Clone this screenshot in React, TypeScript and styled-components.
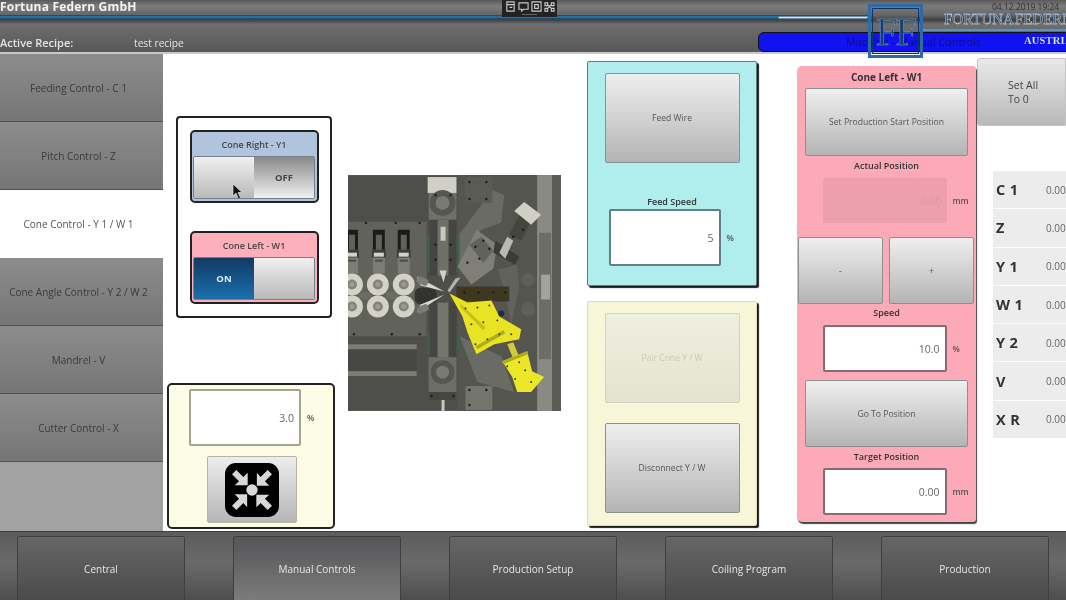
import React from "react";
import styled, { createGlobalStyle } from "styled-components";

const Global = createGlobalStyle`
  html, body { margin: 0; padding: 0; width: 1066px; height: 600px; overflow: hidden; background: #fff; }
  body { font-family: "Open Sans", "Noto Sans", sans-serif; color: #444; }
  * { box-sizing: border-box; }
`;

const Page = styled.div`
  width: 1066px; height: 600px; display: grid; grid-template-rows: 54px 477px 69px; position: relative; overflow: hidden;
  filter: blur(0.3px);
`;

const Header = styled.header`
  position: relative; background: linear-gradient(#5a5a5a 0, #7c7c7c 6px, #666 15px, #3f3f3f 20px, #6e6e6e 24px, #595959 50px);
  border-bottom: 2px solid #c9c9c9; color: #eee; overflow: hidden;
`;
const HeaderRows = styled.div`
  display: grid; grid-template-rows: 15px 5px 32px; height: 52px;
`;
const Company = styled.div`
  font-weight: 700; font-size: 12px; line-height: 14px; letter-spacing: 0.2px; color: #f2f2f2;
`;
const BlueLine = styled.div`
  height: 4px; width: 868px; background: linear-gradient(#123f60, #2f7fb3 50%, #123f60);
`;
const RecipeRow = styled.div`
  display: flex; align-items: flex-end; padding-bottom: 2px; font-size: 10.2px; color: #e4e4e4;
`;
const RecipeLabel = styled.span`
  width: 134px; font-weight: 600; font-size: 11px;
`;
const Widget = styled.div`
  position: absolute; left: 502px; top: 0; width: 55px; height: 17px; background: #232325;
  display: flex; gap: 2px; justify-content: center; padding-top: 1px;
`;
const WidgetHandle = styled.div`
  position: absolute; left: 20px; top: 14px; width: 15px; height: 1px; background: #666;
`;
const WhiteLine = styled.div`
  position: absolute; left: 778px; top: 16px; width: 90px; height: 3px; background: #d9e4ee; border-radius: 2px; border: 1px solid #6f8ca5;
`;
const StampDate = styled.div`
  position: absolute; left: 992px; top: 1px; font-size: 8.5px; line-height: 11px; color: #333;
`;
const BlueBar = styled.div`
  position: absolute; left: 758px; top: 32px; width: 320px; height: 20px; background: #1212f0;
  border: 1px solid #111; border-radius: 6px 0 0 6px; font-size: 10.8px; line-height: 18px; color: #0b0e8c; padding-left: 87px; white-space: nowrap;
`;
const Brand = styled.div`
  position: absolute; left: 944px; top: 10px; font-family: "Liberation Serif", serif; font-size: 15px; line-height: 19px; word-spacing: -2px;
  color: #1f4f86; -webkit-text-stroke: 0.35px #e6eef5; white-space: nowrap;
`;
const BrandSub = styled.div`
  position: absolute; left: 1024px; top: 35px; font-family: "Liberation Serif", serif; font-size: 10.5px; line-height: 12px; font-weight: 700;
  color: #e9eef8; letter-spacing: 0.2px; -webkit-text-stroke: 0.2px #123a8c;
`;
const BrandLine = styled.div`
  position: absolute; left: 922px; top: 29px; width: 144px; height: 2px; background: #5f93bd;
`;
const LogoBox = styled.div`
  position: absolute; left: 868px; top: 4px; width: 55px; height: 54px; z-index: 3;
  border: 3px solid #2c6ba5; outline: 1px solid #0f3561; outline-offset: -5px;
  display: flex; align-items: center; justify-content: center;
  font-family: "Liberation Serif", serif; font-size: 39px; line-height: 1; color: #0f3f78; -webkit-text-stroke: 0.45px #8fb0cc; letter-spacing: -2px;
`;

const Body = styled.main`
  display: grid; grid-template-columns: 163px 1fr; background: #fff; min-height: 0;
`;
const Sidebar = styled.nav`
  display: flex; flex-direction: column; background: #a2a2a2;
`;
const NavItem = styled.div<{ $active?: boolean }>`
  height: 68px; display: flex; align-items: center; justify-content: center; font-size: 10px; padding-right: 6px;
  color: ${(p) => (p.$active ? "#555" : "#3a3a3a")};
  background: ${(p) => (p.$active ? "#fff" : "linear-gradient(#8c8c8c, #767676)")};
  border-bottom: 1px solid ${(p) => (p.$active ? "#fff" : "#505050")};
`;
const Content = styled.div`
  display: flex; position: relative; align-items: flex-start; min-width: 0;
`;
const ColA = styled.div`
  width: 173px; margin-left: 4px; display: flex; flex-direction: column; align-items: flex-start; flex: none;
`;
const TogglePanel = styled.div`
  margin: 62px 0 0 9px; width: 156px; height: 202px; border: 2px solid #222; border-radius: 4px; background: #fff;
  display: flex; flex-direction: column; align-items: center; padding: 12px 0 0; gap: 28px;
`;
const ToggleCard = styled.div<{ $bg: string }>`
  width: 129px; height: 73px; border: 2px solid #222; border-radius: 5px; background: ${(p) => p.$bg};
  display: flex; flex-direction: column; align-items: center;
`;
const ToggleTitle = styled.div`
  height: 24px; line-height: 25px; font-size: 9px; font-weight: 600; color: #444;
`;
const Switch = styled.div`
  width: 122px; height: 43px; display: flex; border: 1px solid #76808c; border-radius: 2px; overflow: hidden; flex: none;
`;
const Half = styled.div<{ $kind: "light" | "dark" | "on" }>`
  flex: 1; display: flex; align-items: center; justify-content: center; font-size: 9.5px; font-weight: 700; position: relative;
  color: ${(p) => (p.$kind === "on" ? "#dce8f2" : "#444")};
  background: ${(p) =>
    p.$kind === "on" ? "linear-gradient(#123a63, #1a6fae)" : p.$kind === "dark" ? "linear-gradient(#8a8a8a, #f0f0f0)" : "linear-gradient(#f0f0f0, #b9b9b9)"};
`;
const Cursor = styled.svg`
  position: absolute; left: 38px; top: 26px;
`;
const SpeedPanel = styled.div`
  margin-top: 65px; width: 168px; height: 146px; border: 2px solid #222; border-radius: 5px; background: #fdfde6;
  display: flex; flex-direction: column; align-items: center; padding-top: 4px; gap: 10px;
`;
const Row = styled.div<{ $ml?: number; $mt?: number }>`
  display: flex; align-items: center; gap: 6px; position: relative;
  margin-left: ${(p) => p.$ml ?? 0}px; margin-top: ${(p) => p.$mt ?? 0}px;
`;
const Input = styled.div<{ $w: number; $h: number; $bd?: string; $off?: boolean }>`
  width: ${(p) => p.$w}px; height: ${(p) => p.$h}px; background: ${(p) => (p.$off ? "#eda0ac" : "#fff")};
  border: ${(p) => (p.$off ? "0" : `2px solid ${p.$bd ?? "#a3a38f"}`)}; border-radius: 2px;
  display: flex; align-items: center; justify-content: flex-end; padding-right: 5px;
  font-size: 10.5px; color: ${(p) => (p.$off ? "#dc9aa4" : "#666")};
`;
const Unit = styled.span`
  font-size: 8.5px; color: #555; font-weight: 600; width: 18px;
`;
const IconButton = styled.div`
  width: 90px; height: 67px; margin-left: 2px; border: 1px solid #b4b4a6; border-radius: 2px; background: linear-gradient(#ededed, #b6b6b6);
  display: flex; align-items: center; justify-content: center;
`;
const Machine = styled.svg`
  display: block; margin: 121px 0 0 8px; width: 213px; height: 236px; flex: none; filter: blur(0.4px);
`;
const ColC = styled.div`
  width: 170px; margin-left: 26px; padding-top: 7px; display: flex; flex-direction: column; gap: 15px; flex: none;
`;
const Panel = styled.div<{ $bg: string; $bd?: string }>`
  height: 225px; background: ${(p) => p.$bg}; border-radius: 2px;
  border: 1px solid ${(p) => p.$bd ?? "#66797a"}; box-shadow: 2px 2px 1px #1c1c1c;
  display: flex; flex-direction: column; align-items: center;
`;
const Btn = styled.div<{ $w: number; $h: number; $dim?: boolean; $mt?: number }>`
  width: ${(p) => p.$w}px; height: ${(p) => p.$h}px; flex: none; border-radius: 2px; margin-top: ${(p) => p.$mt ?? 0}px;
  border: 1px solid ${(p) => (p.$dim ? "#d3d3bf" : "#8b9191")};
  background: ${(p) => (p.$dim ? "linear-gradient(#efefe0, #e2e3cf)" : "linear-gradient(#efefef, #b4b4b4)")};
  display: flex; align-items: center; justify-content: center; font-size: 8.6px;
  color: ${(p) => (p.$dim ? "#c9c9b6" : "#555")};
`;
const Label = styled.div<{ $m?: string }>`
  font-size: 9px; font-weight: 600; color: #333; line-height: 13px; margin: ${(p) => p.$m ?? "0"}; text-align: center;
`;
const PinkPanel = styled.div`
  width: 179px; height: 456px; margin: 12px 0 0 40px; flex: none; background: #fdaab8; border-radius: 5px 3px 3px 5px;
  box-shadow: 1px 2px 1px #444; display: flex; flex-direction: column; align-items: center; position: relative;
`;
const PinkTitle = styled.div`
  height: 22px; line-height: 22px; font-size: 10px; font-weight: 700; color: #333;
`;
const Pair = styled.div`
  display: flex; gap: 6px; margin: 14px 1px 0 0;
`;
const RightCol = styled.div`
  flex: 1; display: flex; flex-direction: column; padding-top: 4px; min-width: 0;
`;
const SetAll = styled.div`
  margin-left: 1px; height: 68px; border-radius: 3px 0 0 3px; border: 1px solid #c4c4c4; background: linear-gradient(#e9e9e9, #b8b8b8);
  font-size: 10.5px; line-height: 14px; color: #444; padding: 19px 0 0 30px;
`;
const Table = styled.div`
  margin: 45px 0 0 17px; display: flex; flex-direction: column;
`;
const TableRow = styled.div`
  height: 38.3px; display: flex; align-items: center; background: #ececec; border-bottom: 1px solid #fff; padding-left: 3px;
`;
const Axis = styled.span`
  width: 50px; font-size: 14.5px; font-weight: 700; color: #333; letter-spacing: 0.4px;
`;
const Val = styled.span`
  font-size: 10px; color: #666;
`;
const Footer = styled.footer`
  background: linear-gradient(#5c5c5c, #6a6a6a 45%, #4e4e4e);
  border-top: 1px solid #3d3d3d; display: flex; gap: 48px; padding: 4px 0 0 17px; overflow: hidden;
`;
const Tab = styled.div<{ $active?: boolean }>`
  width: 168px; height: 72px; flex: none; border: 1px solid #3f3f3f; border-radius: 2px 2px 0 0;
  background: ${(p) => (p.$active ? "linear-gradient(#555558, #808080)" : "linear-gradient(#666, #484848)")};
  display: flex; align-items: center; justify-content: center; padding-bottom: 6px; font-size: 10px; color: #e6e6e6;
`;

const CenterIcon = () => (
  <svg width="54" height="54" viewBox="0 0 100 100">
    <rect width="100" height="100" rx="20" fill="#000" />
    <circle cx="50" cy="50" r="10.5" fill="#d8d8d8" />
    {[0, 90, 180, 270].map((r) => (
      <path key={r} transform={`rotate(${r} 50 50)`} d="M42 41 L42 18 L34 26 L21 13 L13 21 L26 34 L18 41 Z" fill="#d8d8d8" />
    ))}
  </svg>
);

const bolts: [number, number][] = [
  [122, 7], [139, 7], [122, 24], [139, 24], [122, 216], [139, 216], [122, 231], [18, 48], [48, 48], [72, 48],
  [117, 118], [131, 118], [146, 118], [158, 118], [88, 20], [103, 20], [84, 222], [106, 222], [6, 160], [44, 160], [72, 160],
  [128, 72], [136, 66], [142, 74], [132, 84], [120, 88], [176, 55], [166, 62], [88, 70], [88, 85], [103, 70], [103, 85],
];
const yellowBolts: [number, number][] = [
  [118, 134], [130, 133], [142, 131], [124, 150], [136, 148], [150, 146], [128, 170], [140, 165], [152, 160], [164, 160],
  [160, 192], [172, 188], [178, 196], [168, 205], [184, 208],
];

const MachineArt = () => (
  <Machine viewBox="0 0 214 237">
    <rect width="214" height="237" fill="#4e4e4a" />
    <rect x="110" width="80" height="237" fill="#555550" />
    <rect x="190" width="15" height="237" fill="#8a8a83" />
    <rect x="205" width="9" height="237" fill="#5c5c57" />
    <rect x="192" y="58" width="12" height="127" fill="#6d6d67" />
    <rect x="194" y="100" width="9" height="25" fill="#a3a39b" />
    {/* big plates */}
    <path d="M145 15 L157 20 L154 48 L134 55 L110 92 L110 62 Z" fill="#6b6b65" />
    <path d="M112 162 L130 208 L167 218 L154 182 Z" fill="#6b6b65" />
    <path d="M150 95 L170 90 L172 112 L164 150 L156 112 Z" fill="#62625c" />
    {/* left plate */}
    <rect x="0" y="47" width="79" height="115" fill="#62625d" />
    <rect x="0" y="170" width="69" height="32" fill="#474744" />
    <rect x="0" y="170" width="69" height="5" fill="#7c7c74" />
    <rect x="0" y="197" width="69" height="5" fill="#7c7c74" />
    {[-2, 25, 50].map((x) => (
      <g key={x}>
        <path d={`M${x} 55 h12 v20 h-3 v-15 h-6 v15 h-3 z`} fill="#1b1b19" />
        <rect x={x - 1} y="75" width="14" height="8" fill="#3e3e3b" />
        <rect x={x + 1} y="78" width="10" height="4" fill="#d2d2c8" />
        <rect x={x} y="83" width="12" height="16" fill="#7d7d75" />
        <rect x={x + 2} y="85" width="8" height="2" fill="#4b4b47" />
      </g>
    ))}
    {([[4, 110], [30, 110], [56, 110], [4, 132], [30, 132], [56, 132]] as [number, number][]).map(([x, y]) => (
      <g key={`${x}-${y}`}>
        <circle cx={x} cy={y} r="11" fill="#d2d2c6" />
        <circle cx={x} cy={y} r="5" fill="#84847c" />
        <circle cx={x} cy={y} r="2.5" fill="#9c9c94" />
      </g>
    ))}
    <ellipse cx="17" cy="121" rx="6" ry="4" fill="#6c6c66" />
    <ellipse cx="44" cy="121" rx="6" ry="4" fill="#6c6c66" />
    <rect x="67" y="113" width="22" height="17" rx="6" fill="#33332f" />
    {/* upper column */}
    <rect x="80" y="2" width="29" height="16" fill="#d0d0c7" />
    <rect x="81" y="18" width="28" height="27" fill="#70706a" />
    <circle cx="95" cy="28" r="13" fill="#565650" />
    <circle cx="95" cy="28" r="7" fill="#7a7a72" />
    <rect x="82" y="45" width="27" height="56" fill="#454542" />
    <rect x="90" y="45" width="11" height="56" fill="#6f6f68" />
    <rect x="93" y="52" width="5" height="14" fill="#c8c8be" />
    <path d="M92 96 H99 L96 108 Z" fill="#d2d2c8" />
    <rect x="79" y="60" width="3" height="38" fill="#3f5f49" />
    <rect x="109" y="60" width="3" height="38" fill="#3f5f49" />
    {/* lower column */}
    <rect x="82" y="128" width="27" height="55" fill="#454542" />
    <rect x="90" y="128" width="11" height="55" fill="#75756e" />
    <rect x="79" y="158" width="3" height="22" fill="#3f5f49" />
    <rect x="109" y="158" width="3" height="22" fill="#3f5f49" />
    <rect x="81" y="183" width="28" height="42" fill="#6e6e68" />
    <circle cx="95" cy="198" r="12" fill="#565650" />
    <circle cx="95" cy="198" r="6.5" fill="#7a7a72" />
    <rect x="81" y="218" width="28" height="8" fill="#454542" />
    <rect x="94" y="226" width="3" height="11" fill="#c8c8be" />
    {/* corner plates */}
    <rect x="118" y="2" width="27" height="26" fill="#5b5b56" />
    <rect x="118" y="212" width="27" height="24" fill="#75756e" />
    {/* upper tool */}
    <path d="M110 92 L129 55 L150 70 L146 94 L124 110 Z" fill="#7f7f77" />
    <path d="M122 70 L134 62 L146 76 L136 88 Z" fill="#62625c" />
    <path d="M148 66 L172 82 L168 90 L146 78 Z" fill="#3b3b38" />
    <path d="M152 78 L160 62 L166 66 L158 84 Z" fill="#b9b9b0" />
    <path d="M162 60 L172 40 L183 48 L174 66 Z" fill="#45453f" />
    <path d="M167 36 L177 27 L194 40 L184 50 Z" fill="#cfcfc4" />
    <path d="M100 116 L108 104 L113 103 L102 118 Z" fill="#b3b3a9" />
    {/* tool tips */}
    <path d="M69 102 L97 117 L73 111 Z" fill="#d8d8ce" />
    <path d="M69 138 L97 120 L73 130 Z" fill="#d8d8ce" />
    <rect x="69" y="103" width="12" height="7" rx="3" fill="#7c7c74" transform="rotate(25 75 106)" />
    <rect x="69" y="131" width="12" height="7" rx="3" fill="#7c7c74" transform="rotate(-25 75 134)" />
    {/* brown */}
    <rect x="109" y="112" width="53" height="15" fill="#3e3820" />
    {/* yellow */}
    <path d="M102 119 L120 128 L144 126 L152 142 L174 155 L172 165 L147 170 L129 180 L120 158 L115 142 Z" fill="#e8e424" />
    <path d="M112 128 L138 153 L136 156 L114 134 Z" fill="#c4c01e" />
    <path d="M128 172 L156 156 L158 159 L130 175 Z" fill="#b0ac1a" />
    <path d="M160 170 L166 168 L175 190 L169 192 Z" fill="#cfcb3a" />
    <path d="M155 187 L180 177 L185 197 L197 203 L184 218 L170 218 L165 203 Z" fill="#ebe726" />
    <path d="M155 187 L180 177 L181 180 L156 190 Z" fill="#b0ac1a" />
    {bolts.map(([x, y], i) => (
      <circle key={i} cx={x} cy={y} r="1.2" fill="#1c1c1a" />
    ))}
    {yellowBolts.map(([x, y], i) => (
      <circle key={i} cx={x} cy={y} r="1" fill="#3a3a10" />
    ))}
    <circle cx="154" cy="139" r="3" fill="#222c3c" />
    <circle cx="181" cy="105" r="7" fill="#5f5f59" />
    <circle cx="181" cy="135" r="7" fill="#5f5f59" />
  </Machine>
);

export default function App() {
  return (
    <Page>
      <Global />
      <Header>
        <HeaderRows>
          <Company>Fortuna Federn GmbH</Company>
          <BlueLine />
          <RecipeRow>
            <RecipeLabel>Active Recipe:</RecipeLabel>
            <span>test recipe</span>
          </RecipeRow>
        </HeaderRows>
        <Widget>
          {[0, 1, 2, 3].map((i) => (
            <svg key={i} width="11" height="11" viewBox="0 0 12 12" fill="none" stroke="#ccc" strokeWidth="1.2">
              {i === 0 && <path d="M2 1h8v10H2zM2 4h8M5 7h3" />}
              {i === 1 && <path d="M1 2h10v7H6l-2 2V9H1z" />}
              {i === 2 && <path d="M1 1h10v10H1zM4 4h4v4H4z" />}
              {i === 3 && <path d="M1 2h3v3H1zM8 2h3v3H8zM1 8h3v3H1zM8 8h3v3H8zM4 4l4 4M8 4L4 8" />}
            </svg>
          ))}
          <WidgetHandle />
        </Widget>
        <WhiteLine />
        <StampDate>04.12.2019 19:24</StampDate>
        <BlueBar>Machine - Manual Controls</BlueBar>
        <BrandLine />
        <Brand>FORTUNA FEDERN</Brand>
        <BrandSub>AUSTRIA</BrandSub>
      </Header>
      <LogoBox>FF</LogoBox>
      <Body>
        <Sidebar>
          <NavItem>Feeding Control - C 1</NavItem>
          <NavItem>Pitch Control - Z</NavItem>
          <NavItem $active>Cone Control - Y 1 / W 1</NavItem>
          <NavItem>Cone Angle Control - Y 2 / W 2</NavItem>
          <NavItem>Mandrel - V</NavItem>
          <NavItem>Cutter Control - X</NavItem>
        </Sidebar>
        <Content>
          <ColA>
            <TogglePanel>
              <ToggleCard $bg="#b0c4de">
                <ToggleTitle>Cone Right - Y1</ToggleTitle>
                <Switch>
                  <Half $kind="light">
                    <Cursor width="11" height="17" viewBox="0 0 11 17">
                      <path d="M1 1 V13 L4 10 L6.5 16 L8.5 15 L6 9.5 H10 Z" fill="#111" stroke="#eee" strokeWidth="0.6" />
                    </Cursor>
                  </Half>
                  <Half $kind="dark">OFF</Half>
                </Switch>
              </ToggleCard>
              <ToggleCard $bg="#fdb0bc">
                <ToggleTitle>Cone Left - W1</ToggleTitle>
                <Switch>
                  <Half $kind="on">ON</Half>
                  <Half $kind="light" />
                </Switch>
              </ToggleCard>
            </TogglePanel>
            <SpeedPanel>
              <Row $ml={12}>
                <Input $w={112} $h={57}>3.0</Input>
                <Unit>%</Unit>
              </Row>
              <IconButton>
                <CenterIcon />
              </IconButton>
            </SpeedPanel>
          </ColA>
          <MachineArt />
          <ColC>
            <Panel $bg="#b0eeee">
              <Btn $w={135} $h={90} $mt={11}>Feed Wire</Btn>
              <Label $m="32px 0 0">Feed Speed</Label>
              <Row $ml={9} $mt={1}>
                <Input $w={112} $h={57} $bd="#5f8183">5</Input>
                <Unit>%</Unit>
              </Row>
            </Panel>
            <Panel $bg="#f8f6d9" $bd="#e0dcb8">
              <Btn $w={135} $h={90} $dim $mt={11}>Pair Cone Y / W</Btn>
              <Btn $w={135} $h={90} $mt={20}>Disconnect Y / W</Btn>
            </Panel>
          </ColC>
          <PinkPanel>
            <PinkTitle>Cone Left - W1</PinkTitle>
            <Btn $w={163} $h={68}>Set Production Start Position</Btn>
            <Label $m="3px 0 0">Actual Position</Label>
            <Row $ml={20} $mt={6}>
              <Input $w={124} $h={45} $off>0.00</Input>
              <Unit>mm</Unit>
            </Row>
            <Pair>
              <Btn $w={85} $h={67}>-</Btn>
              <Btn $w={85} $h={67}>+</Btn>
            </Pair>
            <Label $m="2px 0 6px">Speed</Label>
            <Row $ml={20}>
              <Input $w={124} $h={47} $bd="#8a6a72">10.0</Input>
              <Unit>%</Unit>
            </Row>
            <Btn $w={163} $h={67} $mt={8}>Go To Position</Btn>
            <Label $m="3px 0 5px">Target Position</Label>
            <Row $ml={20}>
              <Input $w={124} $h={47} $bd="#8a6a72">0.00</Input>
              <Unit>mm</Unit>
            </Row>
          </PinkPanel>
          <RightCol>
            <SetAll>Set All<br />To 0</SetAll>
            <Table>
              {["C 1", "Z", "Y 1", "W 1", "Y 2", "V", "X R"].map((a) => (
                <TableRow key={a}>
                  <Axis>{a}</Axis>
                  <Val>0.00</Val>
                </TableRow>
              ))}
            </Table>
          </RightCol>
        </Content>
      </Body>
      <Footer>
        <Tab>Central</Tab>
        <Tab $active>Manual Controls</Tab>
        <Tab>Production Setup</Tab>
        <Tab>Coiling Program</Tab>
        <Tab>Production</Tab>
      </Footer>
    </Page>
  );
}
